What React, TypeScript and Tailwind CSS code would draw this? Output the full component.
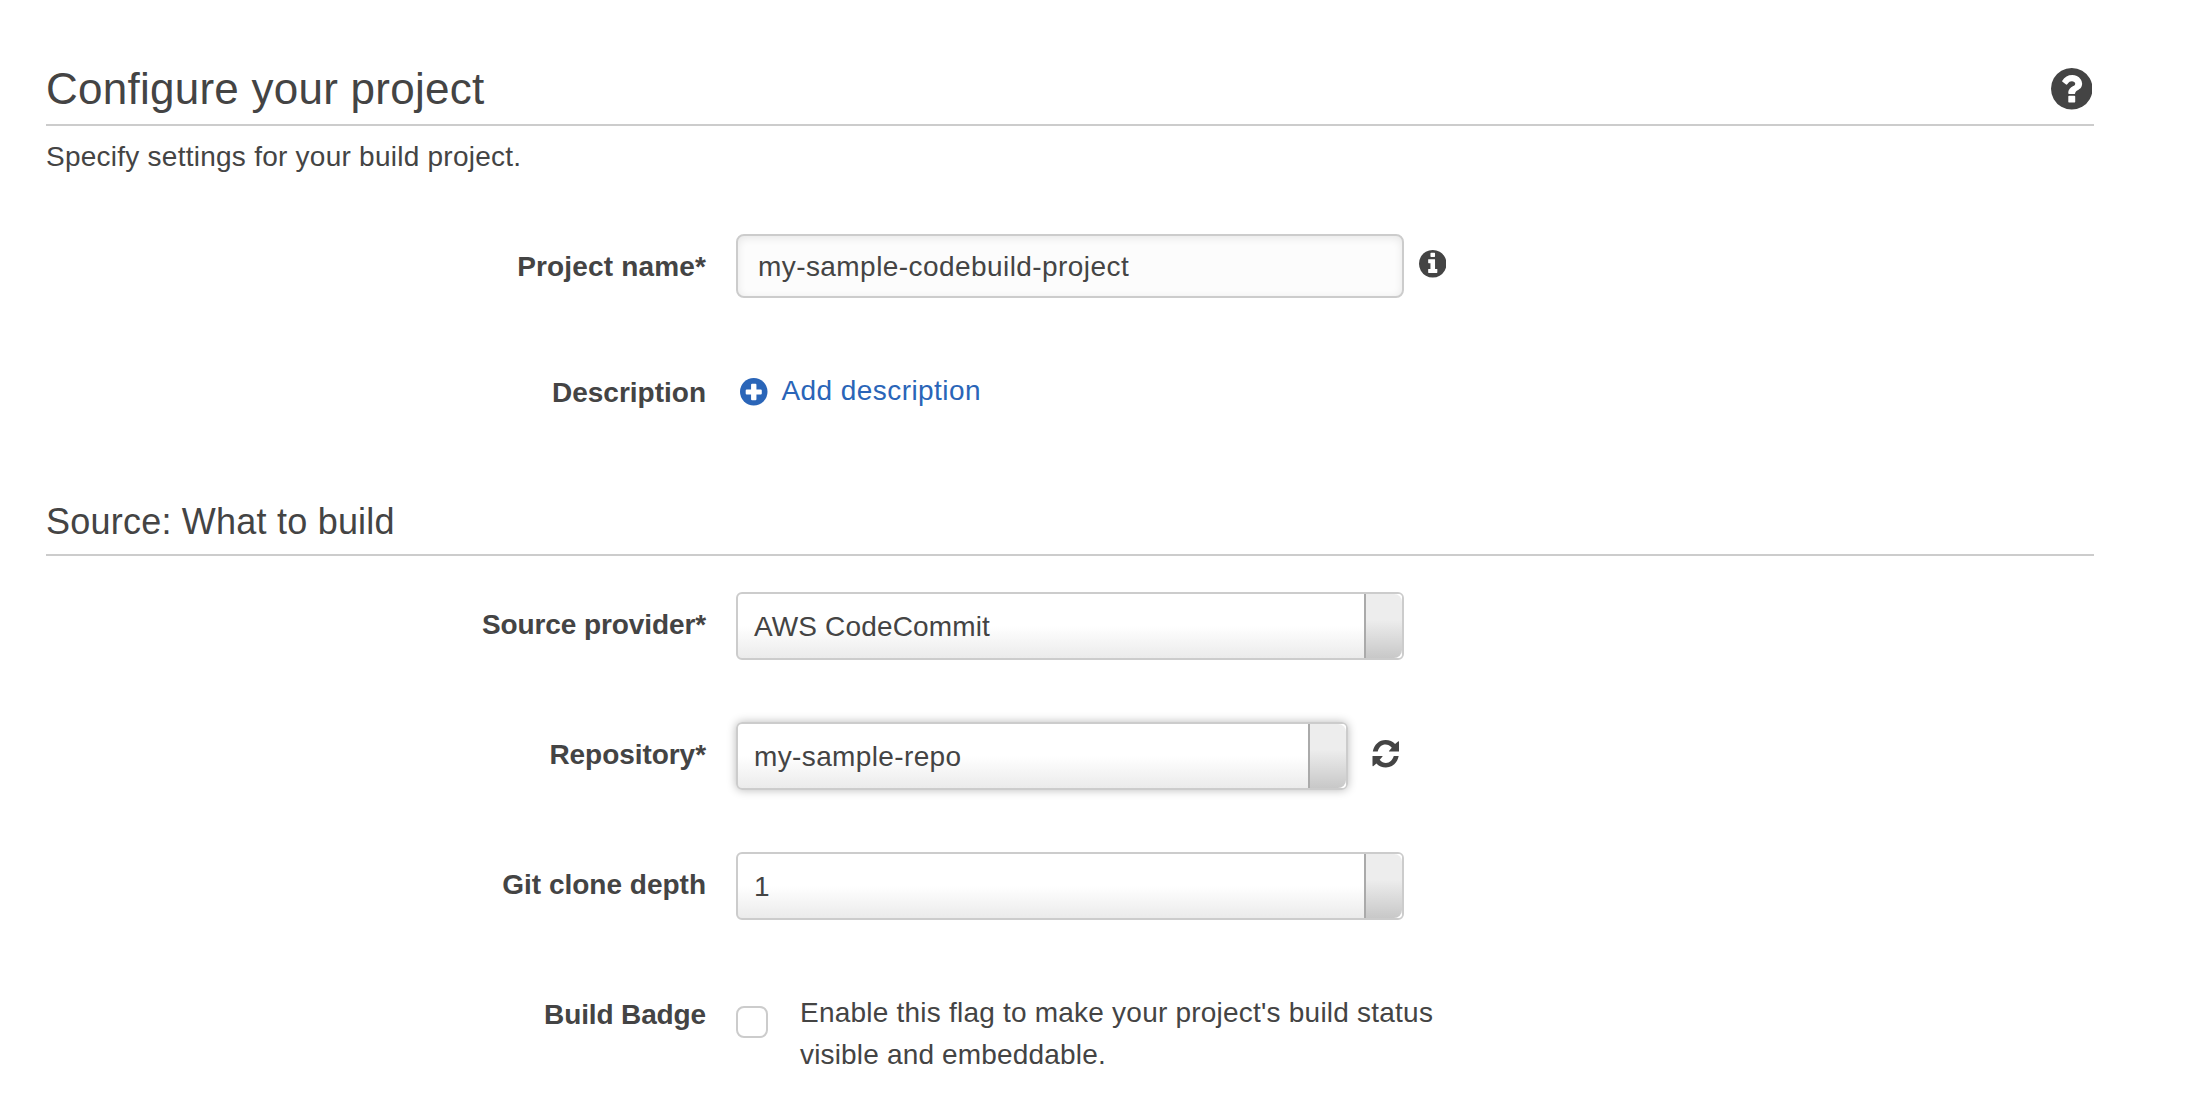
import React from 'react';

type IconProps = { className?: string };

const DISC =
  'M1664 896q0 209-103 385.5t-279.5 279.5-385.5 103-385.5-103-279.5-279.5-103-385.5 103-385.5 279.5-279.5 385.5-103 385.5 103 279.5 279.5 103 385.5z';

function QuestionIcon({ className }: IconProps) {
  return (
    <svg viewBox="128 128 1536 1536" fill="currentColor" className={className}>
      <path
        d={
          'M1024 1376v-192q0-14-9-23t-23-9h-192q-14 0-23 9t-9 23v192q0 14 9 23t23 9h192q14 0 23-9t9-23zm256-672q0-88-55.5-163t-138.5-116-170-41q-243 0-371 213-15 24 8 42l132 100q7 6 19 6 16 0 25-12 53-68 86-92 34-24 86-24 48 0 85.5 26t37.5 59q0 38-20 61t-68 45q-63 28-115.5 86.5t-52.5 125.5v36q0 14 9 23t23 9h192q14 0 23-9t9-23q0-19 21.5-49.5t54.5-49.5q32-18 49-28.5t46-35 44.5-48 28-60.5 12.5-81z' +
          DISC
        }
      />
    </svg>
  );
}

function InfoIcon({ className }: IconProps) {
  return (
    <svg viewBox="128 128 1536 1536" fill="currentColor" className={className}>
      <path
        d={
          'M1152 1376v-160q0-14-9-23t-23-9h-96v-512q0-14-9-23t-23-9h-320q-14 0-23 9t-9 23v160q0 14 9 23t23 9h96v320h-96q-14 0-23 9t-9 23v160q0 14 9 23t23 9h448q14 0 23-9t9-23zm-128-896v-160q0-14-9-23t-23-9h-192q-14 0-23 9t-9 23v160q0 14 9 23t23 9h192q14 0 23-9t9-23z' +
          DISC
        }
      />
    </svg>
  );
}

function PlusIcon({ className }: IconProps) {
  return (
    <svg viewBox="0 0 82 82" className={className}>
      <circle cx="41" cy="41" r="41" fill="currentColor" />
      <path
        d="M36 17h10q3 0 3 3v14h13q3 0 3 3v9q0 3-3 3h-13v14q0 3-3 3h-10q-3 0-3-3v-14h-13q-3 0-3-3v-9q0-3 3-3h13v-14q0-3 3-3z"
        fill="#fff"
      />
    </svg>
  );
}

function RefreshIcon({ className }: IconProps) {
  const arrow = 'M21 59C25 38 40 24 60 24C72 24 82 28 89 36L99 28Q101 27 101 30V59H71Q69 59 71 57L79 48C73 41 67 38 60 38C48 38 40 46 36 59Z';
  return (
    <svg viewBox="19 24 83 84" fill="currentColor" className={className}>
      <path d={arrow} />
      <path d={arrow} transform="rotate(180 60.5 66)" />
    </svg>
  );
}

function Label({ children, className }: { children: React.ReactNode; className: string }) {
  return <label className={`w-[660px] shrink-0 text-right font-bold leading-[31px] ${className}`}>{children}</label>;
}

function Select({ children, className, textClass }: { children: React.ReactNode; className: string; textClass: string }) {
  return (
    <div
      className={`flex h-[68px] shrink-0 rounded-[6px] border-2 border-[#ccc] bg-[linear-gradient(to_bottom,#fff_0%,#fff_50%,#ebebeb_100%)] ${className}`}
    >
      <span className={`flex-1 pt-[17px] pl-4 leading-[31px] ${textClass}`}>{children}</span>
      <div className="w-[38px] rounded-r-[4px] bg-white">
        <div className="h-full rounded-r-[8px] border-l-2 border-[#aaa] bg-[linear-gradient(to_bottom,#ededed_0%,#ededed_40%,#c8c8c8_100%)]" />
      </div>
    </div>
  );
}

export default function App() {
  return (
    <main className="h-[1120px] w-[2192px] overflow-hidden bg-white pt-16 pr-[98px] pl-[46px] font-['Liberation_Sans',Arial,sans-serif] text-[28px] text-[#444]">
      <header className="flex h-[62px] justify-between border-b-2 border-[#ccc]">
        <h1 className="text-[44px] leading-[49px] tracking-[0.25px]">Configure your project</h1>
        <QuestionIcon className="mt-1 mr-[2px] size-[41.5px]" />
      </header>
      <p className="mt-[15px] leading-[31px] tracking-[0.25px]">Specify settings for your build project.</p>

      <div className="mt-[62px] flex h-16 items-start">
        <Label className="mt-[17px] tracking-[0.16px]">Project name*</Label>
        <div className="ml-[30px] h-16 w-[668px] rounded-[8px] border-2 border-[#ccc] bg-[#fcfcfc] pt-[15px] pl-5 leading-[31px] tracking-[0.43px] shadow-[inset_0_2px_8px_rgba(0,0,0,0.09)]">
          my-sample-codebuild-project
        </div>
        <InfoIcon className="mt-4 ml-[14.5px] size-[27.5px]" />
      </div>

      <div className="mt-[77px] flex h-[33px] items-start">
        <Label className="mt-[2px]">Description</Label>
        <a className="ml-[34px] flex items-start text-[#2a65b8]">
          <PlusIcon className="mt-[3px] size-[27.5px]" />
          <span className="ml-[14px] leading-[31px] tracking-[0.43px]">Add description</span>
        </a>
      </div>

      <h2 className="mt-[93px] h-[55px] border-b-2 border-[#ccc] text-[36px] leading-[41px] tracking-[0.22px]">
        Source: What to build
      </h2>

      <div className="mt-9 flex items-start">
        <Label className="mt-[17px] tracking-[-0.1px]">Source provider*</Label>
        <Select className="ml-[30px] w-[668px]" textClass="tracking-[0.15px]">
          AWS CodeCommit
        </Select>
      </div>

      <div className="mt-[62px] flex items-start">
        <Label className="mt-[17px] tracking-[-0.05px]">Repository*</Label>
        <Select className="ml-[30px] w-[612px] shadow-[0_0_10px_rgba(0,0,0,0.28)]" textClass="tracking-[0.37px]">
          my-sample-repo
        </Select>
        <RefreshIcon className="mt-[18px] ml-6 size-[27.5px]" />
      </div>

      <div className="mt-[62px] flex items-start">
        <Label className="mt-[17px]">Git clone depth</Label>
        <Select className="ml-[30px] w-[668px]" textClass="">
          1
        </Select>
      </div>

      <div className="mt-[72px] flex items-start">
        <Label className="mt-[7px] tracking-[-0.13px]">Build Badge</Label>
        <div className="mt-[14px] ml-[30px] size-8 rounded-[8px] border-2 border-[#ccc] bg-white" />
        <p className="ml-8 leading-[42px]">
          <span className="block tracking-[0.22px]">Enable this flag to make your project's build status</span>
          <span className="block tracking-[0.17px]">visible and embeddable.</span>
        </p>
      </div>
    </main>
  );
}
